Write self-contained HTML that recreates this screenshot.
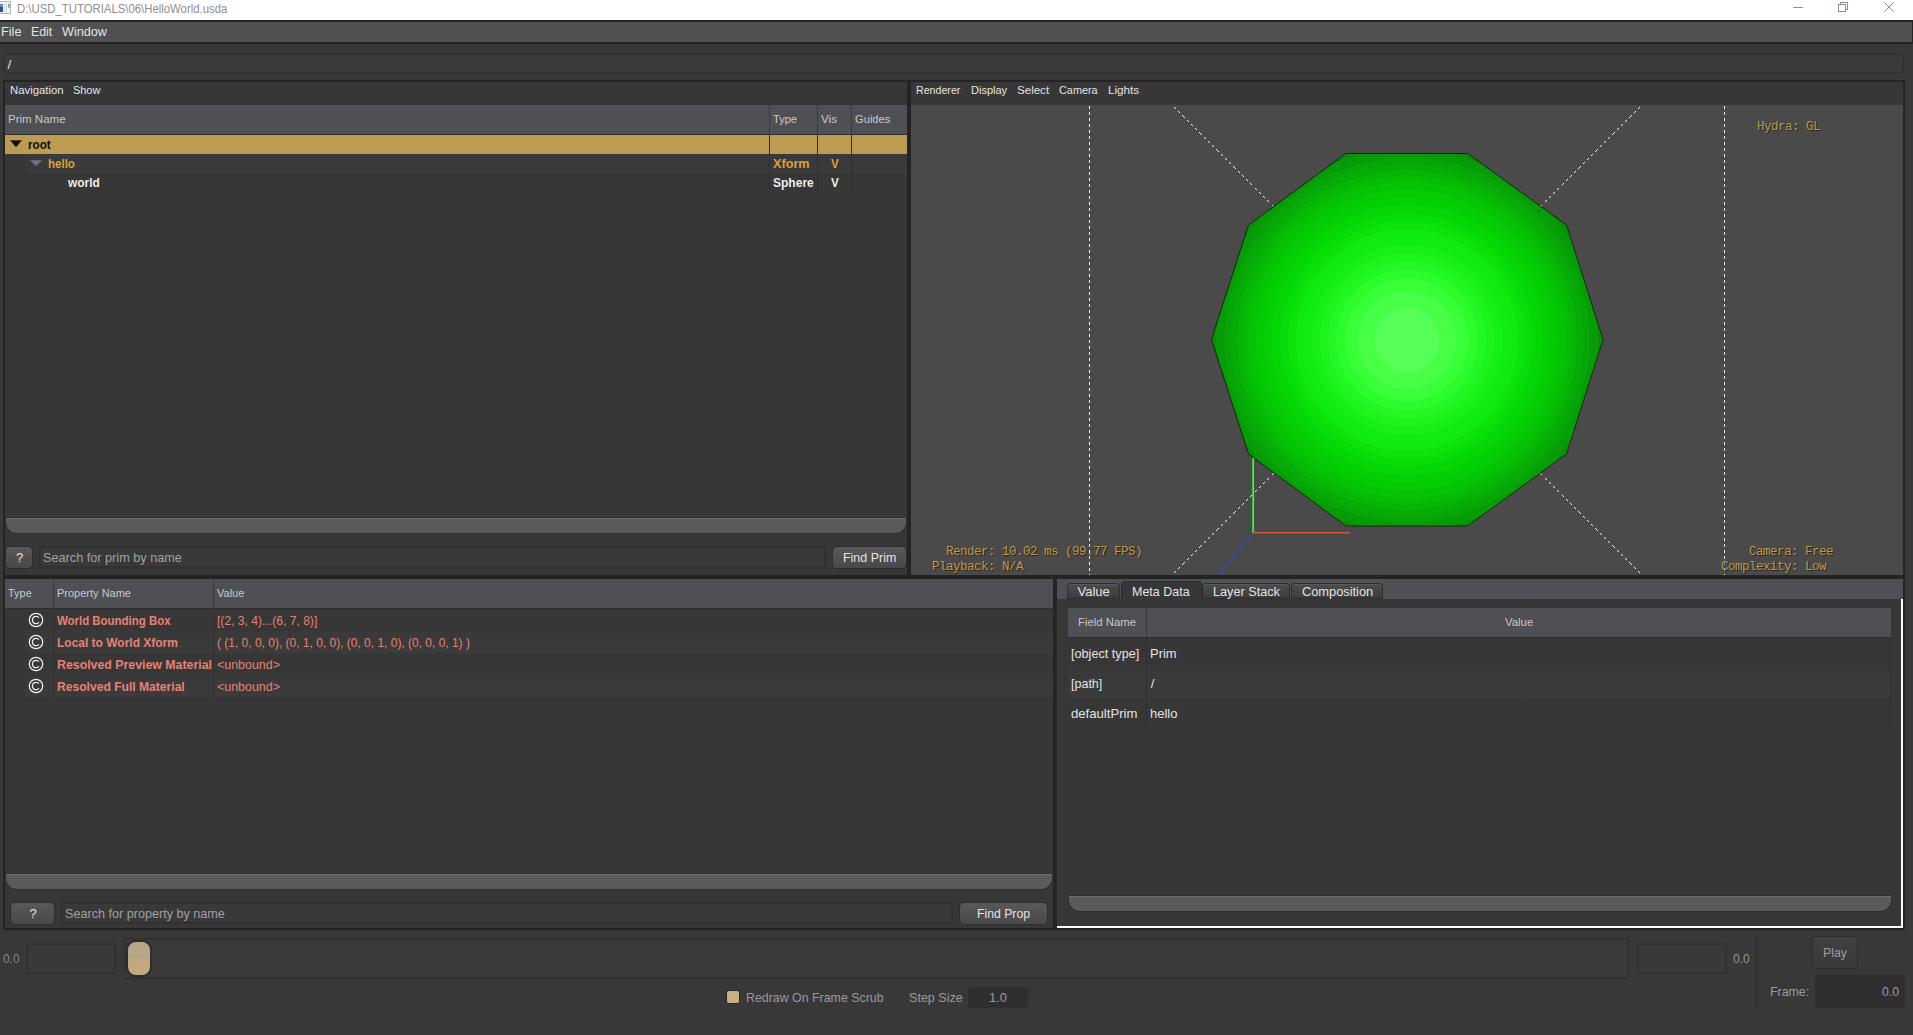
<!DOCTYPE html>
<html>
<head>
<meta charset="utf-8">
<style>
html,body{margin:0;padding:0;}
body{width:1913px;height:1035px;overflow:hidden;background:#383838;position:relative;font-family:"Liberation Sans",sans-serif;color:#e3e3e3;}
.a{position:absolute;}
.t{position:absolute;white-space:nowrap;line-height:1;}
.dk{background:#232423;}
.hdr{background:#4e5054;}
.mono{font-family:"Liberation Mono",monospace;font-size:12.5px;letter-spacing:-0.5px;color:#bd994d;text-shadow:1px 1px 0 #2a2312;white-space:pre;position:absolute;line-height:1;}
.sb{position:absolute;background:#5a5a5a;border-top:1px solid #6e6e6e;box-sizing:border-box;border-radius:0 0 11px 11px;box-shadow:0 0 0 1px #2e2e2e;}
.btn{position:absolute;box-sizing:border-box;border-radius:5px;background:linear-gradient(#595959,#4f4f4f 55%,#494949);border:1px solid #2d2d2d;}
.tab{box-sizing:border-box;border-radius:4px 4px 0 0;background:linear-gradient(#4c4c4c,#3c3c3c);border:1px solid #2e2e2e;border-bottom:1px solid #2c2c2c;box-shadow:inset 0 1px 0 #5a5a5a;}
.inp{position:absolute;box-sizing:border-box;border:2px solid #323232;border-radius:2px;background:#3a3a3a;}
</style>
</head>
<body>
<!-- title bar -->
<div class="a" style="left:0;top:0;width:1913px;height:20px;background:#fff;"></div>
<div class="a" style="left:-1px;top:1px;width:12px;height:13px;background:#f1f2f2;border:1px solid #b3bbb5;box-sizing:border-box;"></div>
<div class="a" style="left:0;top:4px;width:3px;height:3px;background:#5b8ec2;"></div>
<div class="a" style="left:0;top:7px;width:3px;height:5px;background:#34528c;"></div>
<div class="a" style="left:4px;top:3px;width:3px;height:10px;background:#e1e4e6;"></div>
<div class="a" style="left:8px;top:4px;width:2px;height:4px;background:linear-gradient(#5ba3da,#a5ccb5);"></div>
<div class="t" id="title" style="left:17.3px;top:3px;font-size:12px;color:#948d92;transform:scaleX(0.946);transform-origin:0 0;">D:\USD_TUTORIALS\06\HelloWorld.usda</div>
<svg class="a" style="left:1780px;top:0" width="133" height="20" viewBox="0 0 133 20">
 <g stroke="#998a8f" stroke-width="1" fill="none" shape-rendering="crispEdges">
  <path d="M13 7.5H23"/>
  <path d="M58.5 4.5H65.5V11.5H58.5Z"/><path d="M60.5 4.5V2.5H67.5V9.5H65.5"/>
 </g>
 <g stroke="#998a8f" stroke-width="1" fill="none"><path d="M104.2 2.2L113.8 11.8M113.8 2.2L104.2 11.8"/></g>
</svg>

<!-- main menubar -->
<div class="a dk" style="left:0;top:20px;width:1913px;height:24px;"></div>
<div class="a" style="left:0;top:22px;width:1912px;height:20px;background:#515151;"></div>
<div class="t" id="m1" style="left:1px;top:25px;font-size:13px;transform:scaleX(0.980);transform-origin:0 0;">File</div>
<div class="t" id="m2" style="left:30.7px;top:25px;font-size:13px;transform:scaleX(0.950);transform-origin:0 0;">Edit</div>
<div class="t" id="m3" style="left:62px;top:25px;font-size:13px;transform:scaleX(0.972);transform-origin:0 0;">Window</div>

<!-- path bar -->
<div class="inp" style="left:3px;top:53px;width:1901px;height:21px;border-radius:4px;"></div>
<div class="t" id="path" style="left:7.5px;top:57.5px;font-size:13.5px;">/</div>

<!-- prim browser frame -->
<div class="a dk" style="left:3px;top:80px;width:908px;height:499px;"></div>
<div class="a" style="left:5px;top:82px;width:902px;height:493px;background:#373737;"></div>
<div class="t" id="nav1" style="left:10px;top:85px;font-size:11px;transform:scaleX(1.031);transform-origin:0 0;">Navigation</div>
<div class="t" id="nav2" style="left:73px;top:85px;font-size:11px;transform:scaleX(0.993);transform-origin:0 0;">Show</div>
<!-- header -->
<div class="a hdr" style="left:5px;top:105px;width:902px;height:29px;"></div>
<div class="a" style="left:5px;top:134px;width:902px;height:1px;background:#2c2c2c;"></div>
<div class="t" id="ph1" style="left:8px;top:114px;font-size:11px;color:#c9c9c9;transform:scaleX(1.046);transform-origin:0 0;">Prim Name</div>
<div class="t" id="ph2" style="left:773px;top:114px;font-size:11px;color:#c9c9c9;transform:scaleX(1.008);transform-origin:0 0;">Type</div>
<div class="t" id="ph3" style="left:821px;top:114px;font-size:11px;color:#c9c9c9;transform:scaleX(1.060);transform-origin:0 0;">Vis</div>
<div class="t" id="ph4" style="left:855px;top:114px;font-size:11px;color:#c9c9c9;transform:scaleX(1.015);transform-origin:0 0;">Guides</div>
<!-- rows -->
<div class="a" style="left:5px;top:135px;width:902px;height:19px;background:#be9b53;"></div>
<div class="a" style="left:25px;top:154px;width:882px;height:19px;background:linear-gradient(#393939,#3b3b3b);"></div>
<!-- column separators -->
<div class="a" style="left:769px;top:105px;width:1px;height:29px;background:#3b3c40;"></div>
<div class="a" style="left:817px;top:105px;width:1px;height:29px;background:#3b3c40;"></div>
<div class="a" style="left:851px;top:105px;width:1px;height:29px;background:#3b3c40;"></div>
<div class="a" style="left:769px;top:135px;width:1px;height:57px;background:#2f2f2f;"></div>
<div class="a" style="left:817px;top:135px;width:1px;height:57px;background:#2f2f2f;"></div>
<div class="a" style="left:851px;top:135px;width:1px;height:57px;background:#2f2f2f;"></div>
<!-- tree content -->
<svg class="a" style="left:9px;top:139px" width="14" height="10"><path d="M1 1.2H13L7 8.2Z" fill="#141414"/></svg>
<div class="t" id="r1" style="left:28px;top:139px;font-size:12px;font-weight:bold;color:#0d0d0d;transform:scaleX(0.974);transform-origin:0 0;">root</div>
<svg class="a" style="left:29px;top:158px" width="14" height="10"><path d="M1 2.2H13L7 8.2Z" fill="#6a7883"/></svg>
<div class="t" id="r2" style="left:48px;top:158px;font-size:12px;font-weight:bold;color:#df9f38;transform:scaleX(0.961);transform-origin:0 0;">hello</div>
<div class="t" id="r2b" style="left:773px;top:158px;font-size:12px;font-weight:bold;color:#df9f38;transform:scaleX(1.056);transform-origin:0 0;">Xform</div>
<div class="t" id="r2c" style="left:831px;top:158px;font-size:12px;font-weight:bold;color:#df9f38;transform:scaleX(0.975);transform-origin:0 0;">V</div>
<div class="t" id="r3" style="left:68px;top:177px;font-size:12px;font-weight:bold;color:#ececec;transform:scaleX(0.994);transform-origin:0 0;">world</div>
<div class="t" id="r3b" style="left:773px;top:177px;font-size:12px;font-weight:bold;color:#ececec;transform:scaleX(1.002);transform-origin:0 0;">Sphere</div>
<div class="t" id="r3c" style="left:831px;top:177px;font-size:12px;font-weight:bold;color:#ececec;transform:scaleX(0.975);transform-origin:0 0;">V</div>
<!-- scrollbar -->
<div class="sb" style="left:6px;top:518px;width:900px;height:15px;"></div>
<!-- search row -->
<div class="btn" style="left:5px;top:546px;width:28px;height:23px;"></div>
<div class="t" id="q1" style="left:16px;top:551px;font-size:13px;">?</div>
<div class="inp" style="left:39px;top:546px;width:787px;height:22px;border-color:#313131;background:#393939;"></div>
<div class="t" id="s1" style="left:42.5px;top:551px;font-size:13px;color:#a0a0a0;transform:scaleX(0.976);transform-origin:0 0;">Search for prim by name</div>
<div class="btn" style="left:832px;top:546px;width:75px;height:23px;"></div>
<div class="t" id="fp" style="left:843px;top:551px;font-size:13px;transform:scaleX(0.958);transform-origin:0 0;">Find Prim</div>
<!-- SECTION: prim browser END -->
<!-- viewer frame -->
<div class="a dk" style="left:907px;top:80px;width:998px;height:499px;"></div>
<div class="a" style="left:911px;top:82px;width:992px;height:23px;background:#373737;"></div>
<div class="t" id="v1" style="left:915.5px;top:85px;font-size:11px;transform:scaleX(0.967);transform-origin:0 0;">Renderer</div>
<div class="t" id="v2" style="left:971px;top:85px;font-size:11px;transform:scaleX(1.000);transform-origin:0 0;">Display</div>
<div class="t" id="v3" style="left:1017px;top:85px;font-size:11px;transform:scaleX(1.050);transform-origin:0 0;">Select</div>
<div class="t" id="v4" style="left:1058.5px;top:85px;font-size:11px;transform:scaleX(0.987);transform-origin:0 0;">Camera</div>
<div class="t" id="v5" style="left:1108px;top:85px;font-size:11px;transform:scaleX(1.062);transform-origin:0 0;">Lights</div>
<svg class="a" style="left:911px;top:105px;" width="992" height="470" viewBox="911 105 992 470">
 <defs>
  <radialGradient id="g" gradientUnits="userSpaceOnUse" cx="1407" cy="340" r="196">
   <stop offset="0.0000" stop-color="#55ff55"/>
   <stop offset="0.1633" stop-color="#55ff55"/>
   <stop offset="0.1633" stop-color="#47ff47"/>
   <stop offset="0.2500" stop-color="#47ff47"/>
   <stop offset="0.2500" stop-color="#38ff38"/>
   <stop offset="0.3143" stop-color="#38ff38"/>
   <stop offset="0.3143" stop-color="#2cfc2c"/>
   <stop offset="0.3612" stop-color="#2cfc2c"/>
   <stop offset="0.3612" stop-color="#24f824"/>
   <stop offset="0.4020" stop-color="#24f824"/>
   <stop offset="0.4020" stop-color="#1cf41c"/>
   <stop offset="0.4439" stop-color="#1cf41c"/>
   <stop offset="0.4439" stop-color="#16f016"/>
   <stop offset="0.4872" stop-color="#16f016"/>
   <stop offset="0.4872" stop-color="#10ec10"/>
   <stop offset="0.5281" stop-color="#10ec10"/>
   <stop offset="0.5281" stop-color="#0fea0f"/>
   <stop offset="0.5663" stop-color="#0fea0f"/>
   <stop offset="0.5663" stop-color="#0be30b"/>
   <stop offset="0.6041" stop-color="#0be30b"/>
   <stop offset="0.6041" stop-color="#07dd07"/>
   <stop offset="0.6429" stop-color="#07dd07"/>
   <stop offset="0.6429" stop-color="#05d605"/>
   <stop offset="0.6918" stop-color="#05d605"/>
   <stop offset="0.6918" stop-color="#04d004"/>
   <stop offset="0.7296" stop-color="#04d004"/>
   <stop offset="0.7296" stop-color="#05cb05"/>
   <stop offset="0.7679" stop-color="#05cb05"/>
   <stop offset="0.7679" stop-color="#05c405"/>
   <stop offset="0.8061" stop-color="#05c405"/>
   <stop offset="0.8061" stop-color="#05bd05"/>
   <stop offset="0.8367" stop-color="#05bd05"/>
   <stop offset="0.8367" stop-color="#06b506"/>
   <stop offset="0.8653" stop-color="#06b506"/>
   <stop offset="0.8653" stop-color="#06ad06"/>
   <stop offset="0.8980" stop-color="#06ad06"/>
   <stop offset="0.8980" stop-color="#06a606"/>
   <stop offset="0.9306" stop-color="#06a606"/>
   <stop offset="0.9306" stop-color="#079b07"/>
   <stop offset="0.9735" stop-color="#079b07"/>
   <stop offset="0.9735" stop-color="#088f08"/>
   <stop offset="1.0000" stop-color="#088f08"/>
  </radialGradient>
 </defs>
 <rect x="911" y="105" width="992" height="470" fill="#4a4a4a"/>
 <g stroke="#ececec" stroke-width="1" fill="none" stroke-dasharray="3 3" shape-rendering="crispEdges">
  <path d="M1089.5 106V575"/><path d="M1724.5 106V575"/>
 </g>
 <g stroke="#f0f0f0" stroke-width="1" fill="none" stroke-dasharray="3 3" shape-rendering="crispEdges">
  <path d="M1174 107L1280 213"/><path d="M1640 107L1534 213"/>
  <path d="M1174 573L1280 467"/><path d="M1640 573L1534 467"/>
 </g>
 <path d="M1346 153.5H1467.5L1566.5 225L1603 339.5L1566.5 454L1467.5 526H1346L1248.5 454L1211.5 339.5L1248.5 225Z" fill="url(#g)" stroke="#0a2c0a" stroke-width="1"/>
 <path d="M1253.2 458V533" stroke="#3cf83c" stroke-width="1.8" fill="none"/>
 <path d="M1253 532.8H1349.5" stroke="#d4553c" stroke-width="1.4" fill="none"/>
 <path d="M1253 533.5L1218.5 575" stroke="#3a4ab0" stroke-width="1.4" fill="none"/>
</svg>
<div class="mono" id="h1" style="left:1757px;top:120.5px;">Hydra: GL</div>
<div class="mono" id="h2" style="left:946px;top:546px;">Render: 10.02 ms (99.77 FPS)</div>
<div class="mono" id="h3" style="left:932px;top:561px;">Playback: N/A</div>
<div class="mono" id="h4" style="left:1749px;top:546px;">Camera: Free</div>
<div class="mono" id="h5" style="left:1721px;top:561px;">Complexity: Low</div>
<!-- SECTION: viewer END -->
<!-- properties frame -->
<div class="a dk" style="left:3px;top:575px;width:1054px;height:355px;"></div>
<div class="a" style="left:5px;top:579px;width:1048px;height:349px;background:#373737;"></div>
<div class="a hdr" style="left:5px;top:579px;width:1048px;height:29px;"></div>
<div class="a" style="left:5px;top:608px;width:1048px;height:1px;background:#2c2c2c;"></div>
<div class="a" style="left:53px;top:579px;width:1px;height:29px;background:#3b3c40;"></div>
<div class="a" style="left:213px;top:579px;width:1px;height:29px;background:#3b3c40;"></div>
<div class="t" id="pp1" style="left:8px;top:588px;font-size:11px;color:#c9c9c9;">Type</div>
<div class="t" id="pp2" style="left:57px;top:588px;font-size:11px;color:#c9c9c9;">Property Name</div>
<div class="t" id="pp3" style="left:217px;top:588px;font-size:11px;color:#c9c9c9;">Value</div>
<!-- rows (22px each from 609) -->
<div class="a" style="left:25px;top:631px;width:1028px;height:22px;background:linear-gradient(#393939,#3b3b3b);"></div>
<div class="a" style="left:25px;top:675px;width:1028px;height:22px;background:linear-gradient(#393939,#3b3b3b);"></div>
<div class="a" style="left:53px;top:609px;width:1px;height:88px;background:#2f2f2f;"></div>
<div class="a" style="left:213px;top:609px;width:1px;height:88px;background:#2f2f2f;"></div>
<svg class="a" style="left:27px;top:611px" width="18" height="84" viewBox="0 0 18 84">
 <g fill="none" stroke="#f0f0f0" stroke-width="1.25">
  <circle cx="9" cy="9" r="6.7"/><path d="M11.9 6.6A3.7 3.7 0 1 0 11.9 11.4"/>
  <circle cx="9" cy="31" r="6.7"/><path d="M11.9 28.6A3.7 3.7 0 1 0 11.9 33.4"/>
  <circle cx="9" cy="53" r="6.7"/><path d="M11.9 50.6A3.7 3.7 0 1 0 11.9 55.4"/>
  <circle cx="9" cy="75" r="6.7"/><path d="M11.9 72.6A3.7 3.7 0 1 0 11.9 77.4"/>
 </g>
</svg>
<div class="t" id="p1a" style="left:57px;top:614.5px;font-size:12px;font-weight:bold;color:#e68175;transform:scaleX(0.953);transform-origin:0 0;">World Bounding Box</div>
<div class="t" id="p1b" style="left:216.5px;top:614.5px;font-size:12px;color:#e68175;transform:scaleX(1.009);transform-origin:0 0;">[(2, 3, 4)...(6, 7, 8)]</div>
<div class="t" id="p2a" style="left:56.5px;top:636.5px;font-size:12px;font-weight:bold;color:#e68175;transform:scaleX(0.998);transform-origin:0 0;">Local to World Xform</div>
<div class="t" id="p2b" style="left:216.5px;top:636.5px;font-size:12px;color:#e68175;transform:scaleX(0.998);transform-origin:0 0;">( (1, 0, 0, 0), (0, 1, 0, 0), (0, 0, 1, 0), (0, 0, 0, 1) )</div>
<div class="t" id="p3a" style="left:56.5px;top:658.5px;font-size:12px;font-weight:bold;color:#e68175;transform:scaleX(1.028);transform-origin:0 0;">Resolved Preview Material</div>
<div class="t" id="p3b" style="left:217px;top:658.5px;font-size:12px;color:#e68175;transform:scaleX(1.036);transform-origin:0 0;">&lt;unbound&gt;</div>
<div class="t" id="p4a" style="left:56.5px;top:680.5px;font-size:12px;font-weight:bold;color:#e68175;transform:scaleX(1.008);transform-origin:0 0;">Resolved Full Material</div>
<div class="t" id="p4b" style="left:217px;top:680.5px;font-size:12px;color:#e68175;transform:scaleX(1.036);transform-origin:0 0;">&lt;unbound&gt;</div>
<!-- scrollbar -->
<div class="sb" style="left:6px;top:874px;width:1046px;height:15px;"></div>
<!-- search row -->
<div class="btn" style="left:10px;top:902px;width:45px;height:23px;"></div>
<div class="t" id="q2" style="left:29.5px;top:907px;font-size:13px;">?</div>
<div class="inp" style="left:61px;top:902px;width:892px;height:22px;border-color:#313131;background:#393939;"></div>
<div class="t" id="s2" style="left:64.5px;top:907px;font-size:13px;color:#a0a0a0;transform:scaleX(0.970);transform-origin:0 0;">Search for property by name</div>
<div class="btn" style="left:959px;top:902px;width:89px;height:23px;"></div>
<div class="t" id="fp2" style="left:976.5px;top:907px;font-size:13px;transform:scaleX(0.941);transform-origin:0 0;">Find Prop</div>
<!-- SECTION: properties END -->
<!-- metadata frame -->
<div class="a dk" style="left:1053px;top:575px;width:852px;height:355px;"></div>
<div class="a" style="left:1057px;top:579px;width:846px;height:349px;background:#373737;"></div>
<div class="a hdr" style="left:1057px;top:579px;width:846px;height:20px;"></div>
<!-- white focus border -->
<div class="a" style="left:1057px;top:926px;width:846px;height:2px;background:#fdfdfd;"></div>
<div class="a" style="left:1901px;top:599px;width:2px;height:329px;background:#fdfdfd;"></div>
<!-- tabs -->
<div class="a tab" style="left:1067px;top:583px;width:53px;height:16px;"></div>
<div class="a tab" style="left:1202px;top:583px;width:88px;height:16px;"></div>
<div class="a tab" style="left:1291px;top:583px;width:92px;height:16px;"></div>
<div class="a" style="left:1121px;top:581px;width:81px;height:19px;background:#373737;border:1px solid #2e2e2e;border-bottom:none;border-radius:4px 4px 0 0;box-sizing:border-box;"></div>
<div class="t" id="tb1" style="left:1077.5px;top:585px;font-size:13px;transform:scaleX(1.000);transform-origin:0 0;">Value</div>
<div class="t" id="tb2" style="left:1131.5px;top:585px;font-size:13px;transform:scaleX(0.960);transform-origin:0 0;">Meta Data</div>
<div class="t" id="tb3" style="left:1212.5px;top:585px;font-size:13px;transform:scaleX(0.975);transform-origin:0 0;">Layer Stack</div>
<div class="t" id="tb4" style="left:1301.5px;top:585px;font-size:13px;transform:scaleX(0.985);transform-origin:0 0;">Composition</div>
<!-- table -->
<div class="a hdr" style="left:1068px;top:608px;width:823px;height:29px;"></div>
<div class="a" style="left:1068px;top:637px;width:823px;height:1px;background:#2c2c2c;"></div>
<div class="a" style="left:1146px;top:608px;width:1px;height:29px;background:#3b3c40;"></div>
<div class="a" style="left:1068px;top:668px;width:823px;height:30px;background:linear-gradient(#393939,#3b3b3b);"></div>
<div class="a" style="left:1146px;top:638px;width:1px;height:90px;background:#2f2f2f;"></div>
<div class="a" style="left:1890px;top:638px;width:1px;height:90px;background:#2f2f2f;"></div>
<div class="t" id="mh1" style="left:1078px;top:617px;font-size:11px;color:#c9c9c9;transform:scaleX(1.031);transform-origin:0 0;">Field Name</div>
<div class="t" id="mh2" style="left:1505px;top:617px;font-size:11px;color:#c9c9c9;transform:scaleX(1.035);transform-origin:0 0;">Value</div>
<div class="t" id="mr1a" style="left:1070.8px;top:647px;font-size:13px;transform:scaleX(0.974);transform-origin:0 0;">[object type]</div>
<div class="t" id="mr1b" style="left:1149.5px;top:647px;font-size:13px;transform:scaleX(0.996);transform-origin:0 0;">Prim</div>
<div class="t" id="mr2a" style="left:1070.8px;top:677px;font-size:13px;transform:scaleX(0.962);transform-origin:0 0;">[path]</div>
<div class="t" id="mr2b" style="left:1150.7px;top:677px;font-size:13px;">/</div>
<div class="t" id="mr3a" style="left:1070.6px;top:707px;font-size:13px;transform:scaleX(1.010);transform-origin:0 0;">defaultPrim</div>
<div class="t" id="mr3b" style="left:1149.7px;top:707px;font-size:13px;transform:scaleX(0.996);transform-origin:0 0;">hello</div>
<div class="sb" style="left:1069px;top:896px;width:822px;height:15px;"></div>
<!-- SECTION: metadata END -->
<!-- timeline -->
<div class="t" id="t0" style="left:3.2px;top:953px;font-size:12px;color:#868686;transform:scaleX(0.988);transform-origin:0 0;">0.0</div>
<div class="inp" style="left:26px;top:943px;width:90px;height:31px;border-color:#313131;background:#393939;"></div>
<div class="a" style="left:124px;top:938px;width:1505px;height:41px;box-sizing:border-box;border:2px solid #313131;background:#3a3a3a;"></div>
<div class="a" style="left:126px;top:940px;width:26px;height:37px;box-sizing:border-box;border-radius:10px;border:2px solid #2d2d2d;background:linear-gradient(#b8a586 0,#b8a586 50%,#c0a77e 52%,#c2a97f 100%);"></div>
<div class="inp" style="left:1637px;top:943px;width:90px;height:31px;border-color:#313131;background:#393939;"></div>
<div class="t" id="t1" style="left:1732.7px;top:953px;font-size:12px;color:#969696;transform:scaleX(1.009);transform-origin:0 0;">0.0</div>
<div class="a" style="left:1756px;top:936px;width:1px;height:72px;background:#2b2b2b;"></div>
<div class="a" style="left:1812px;top:936px;width:46px;height:33px;box-sizing:border-box;border-radius:4px;border:1px solid #2d2d2d;background:linear-gradient(#424242,#3c3c3c 50%,#393939);"></div>
<div class="t" id="pl" style="left:1822.7px;top:946px;font-size:13px;color:#9c9c9c;transform:scaleX(0.950);transform-origin:0 0;">Play</div>
<div class="t" id="fr" style="left:1769.5px;top:985px;font-size:13px;color:#9c9c9c;transform:scaleX(0.952);transform-origin:0 0;">Frame:</div>
<div class="a" style="left:1815px;top:975px;width:90px;height:33px;border-radius:3px;background:#2e2e2e;"></div>
<div class="t" id="fv" style="left:1882px;top:985px;font-size:13px;color:#9c9c9c;transform:scaleX(0.944);transform-origin:0 0;">0.0</div>
<div class="a" style="left:726px;top:990px;width:14px;height:14px;box-sizing:border-box;border-radius:3px;border:1px solid #2a2a2a;background:#c8b086;"></div>
<div class="t" id="rd" style="left:745.5px;top:991px;font-size:13px;color:#9a9a9a;transform:scaleX(0.952);transform-origin:0 0;">Redraw On Frame Scrub</div>
<div class="t" id="ss" style="left:908.5px;top:991px;font-size:13px;color:#9a9a9a;transform:scaleX(0.967);transform-origin:0 0;">Step Size</div>
<div class="a" style="left:968px;top:987px;width:60px;height:21px;border-radius:3px;background:#2f2f2f;"></div>
<div class="t" id="sv" style="left:988.5px;top:991px;font-size:13px;color:#9a9a9a;transform:scaleX(0.988);transform-origin:0 0;">1.0</div>
<!-- SECTION: timeline END -->
</body>
</html>
